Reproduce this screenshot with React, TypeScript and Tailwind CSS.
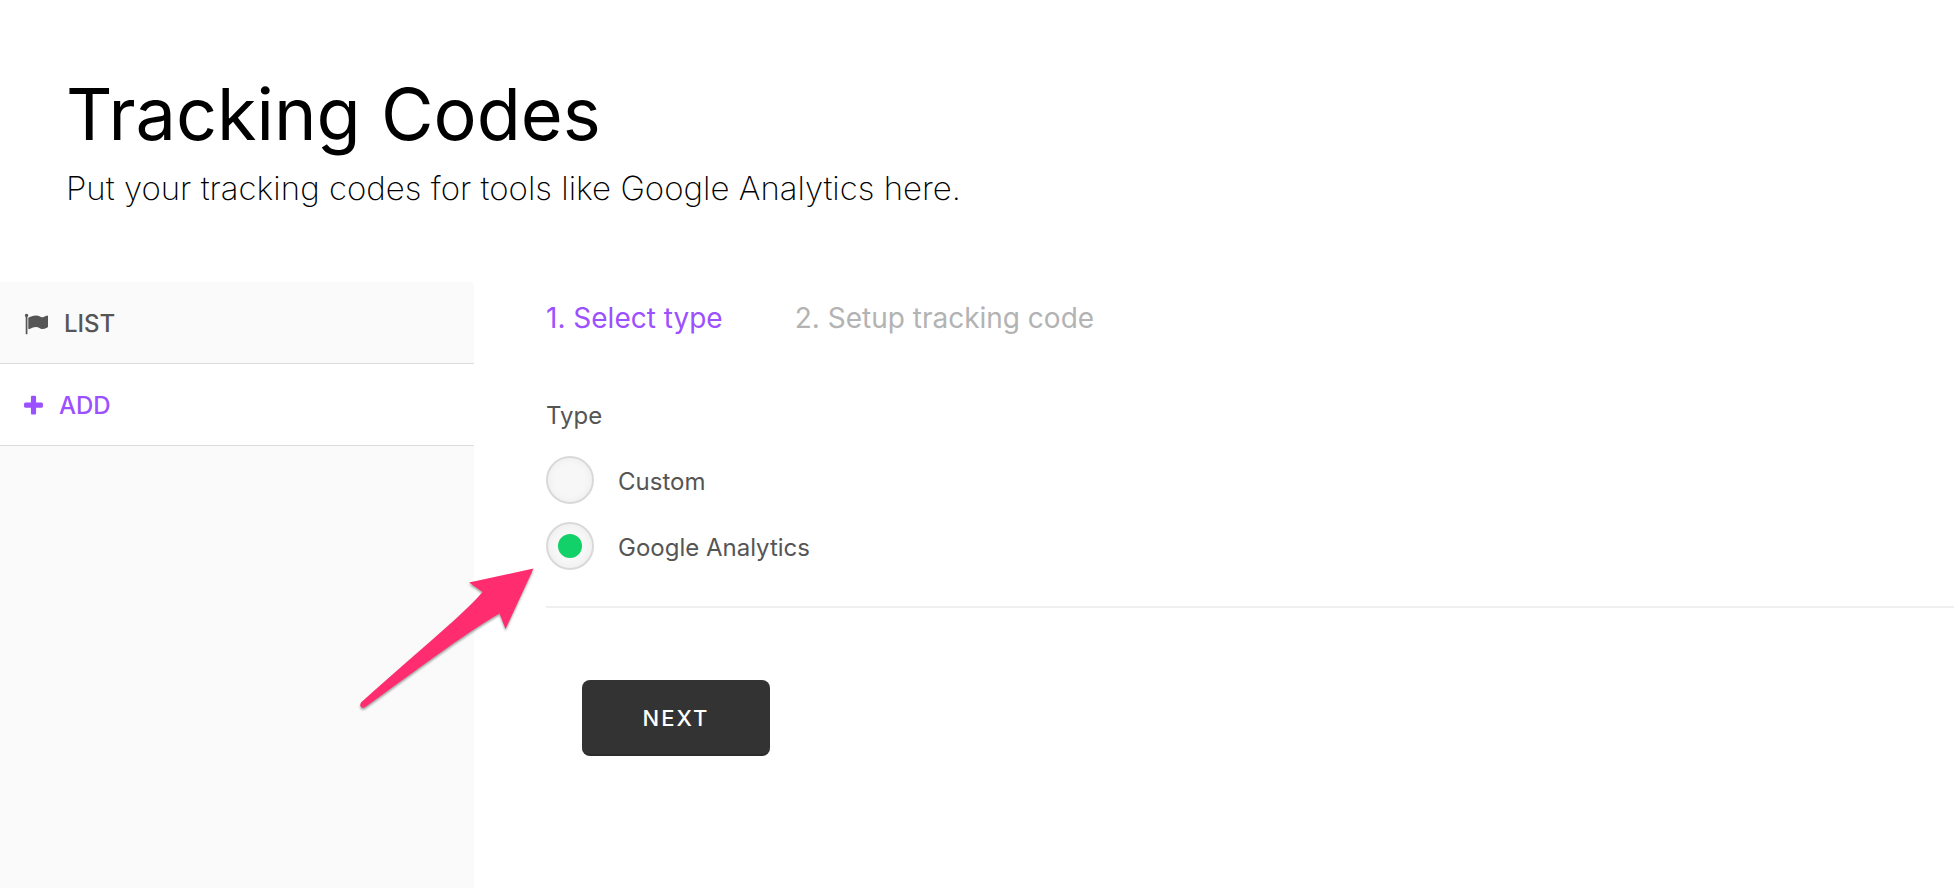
import { useState } from "react";

function FlagIcon() {
  return (
    <svg viewBox="0 0 1792 1792" className="h-6 w-6" fill="currentColor" aria-hidden="true">
      <path d="M320 256q0 72-64 110v1266q0 13-9.5 22.5t-22.5 9.5h-64q-13 0-22.5-9.5t-9.5-22.5v-1266q-64-38-64-110 0-53 37.5-90.5t90.5-37.5 90.5 37.5 37.5 90.5zm1472 64v763q0 25-12.5 38.5t-39.5 27.5q-215 116-369 116-61 0-123.5-22t-108.5-48-115.5-48-142.5-22q-192 0-464 146-17 9-33 9-26 0-45-19t-19-45v-742q0-32 31-55 21-14 79-43 236-120 421-120 107 0 200 29t219 88q38 19 88 19 54 0 117.5-21t110-47 88-47 54.5-21q26 0 45 19t19 45z" />
    </svg>
  );
}

function PlusIcon() {
  return (
    <svg viewBox="192 0 1408 1792" className="h-6 w-[19px]" fill="currentColor" aria-hidden="true">
      <path d="M1600 736v192q0 40-28 68t-68 28h-416v416q0 40-28 68t-68 28h-192q-40 0-68-28t-28-68v-416h-416q-40 0-68-28t-28-68v-192q0-40 28-68t68-28h416v-416q0-40 28-68t68-28h192q40 0 68 28t28 68v416h416q40 0 68 28t28 68z" />
    </svg>
  );
}

function PointerArrow() {
  return (
    <svg
      viewBox="0 0 186 150"
      className="pointer-events-none absolute -left-[192px] top-[42px] h-[150px] w-[186px] overflow-visible drop-shadow-[0_2px_1px_rgba(0,0,0,0.35)]"
      aria-hidden="true"
    >
      <path
        d="M179.500 4.500L115 18.500L128.500 28C110 50 70 82 7 138.500C4.500 143 8.500 145.500 12 142.500C60 108 110 70 145.500 49.500L151.500 65Z"
        fill="#ff2d6f"
      />
    </svg>
  );
}

const TYPES = ["Custom", "Google Analytics"];

export default function App() {
  const [type, setType] = useState("Google Analytics");

  return (
    <div className="flex min-h-screen flex-col bg-white font-['Inter','Liberation_Sans',sans-serif] text-[#555]">
      <header className="px-[66px] pb-[72px] pt-[70px] text-black">
        <h1 className="text-[72px] leading-[88px]">Tracking Codes</h1>
        <p className="mt-2 text-[33px] font-extralight leading-[44px]">
          Put your tracking codes for tools like Google Analytics here.
        </p>
      </header>

      <div className="flex flex-1">
        <nav className="w-[474px] shrink-0 rounded-tr bg-[#fafafa] text-2xl font-medium">
          <a href="#list" className="flex h-[82px] items-center gap-4 border-b border-[#dcdcdc] px-6 pt-0.5">
            <FlagIcon />
            LIST
          </a>
          <a
            href="#add"
            className="flex h-[82px] items-center gap-4 border-b border-[#dcdcdc] bg-white px-6 pt-0.5 text-[#9b51ff]"
          >
            <PlusIcon />
            ADD
          </a>
        </nav>

        <main className="min-w-0 flex-1 pl-[72px] pt-5">
          <ol className="flex gap-[72px] text-[28px] leading-8">
            <li className="text-[#9b51ff]">1. Select type</li>
            <li className="text-[#b3b3b3]">2. Setup tracking code</li>
          </ol>

          <form onSubmit={(e) => e.preventDefault()}>
            <fieldset className="mt-[66px] border-b-2 border-[#efefef] pb-9">
              <legend className="text-2xl">Type</legend>
              <div className="mt-6 flex flex-col items-start gap-[18px]">
                {TYPES.map((name) => (
                  <label key={name} className="relative flex items-center gap-6 text-2xl">
                    <input
                      type="radio"
                      name="type"
                      checked={type === name}
                      onChange={() => setType(name)}
                      className="grid h-12 w-12 appearance-none place-items-center rounded-full border-2 border-[#d9d9d9] bg-[#f7f7f7] shadow-[inset_0_0_8px_rgba(0,0,0,0.05)] before:h-6 before:w-6 before:rounded-full checked:before:bg-[#13d169] checked:before:content-['']"
                    />
                    <span className="pt-1">{name}</span>
                    {name === "Google Analytics" && <PointerArrow />}
                  </label>
                ))}
              </div>
            </fieldset>
            <button
              type="submit"
              className="ml-9 mt-[72px] h-[76px] min-w-[188px] rounded-lg border-b-2 border-[#2b2b2b] bg-[#333] px-[60px] pt-0.5 text-[22px] font-medium tracking-[2px] text-white"
            >
              NEXT
            </button>
          </form>
        </main>
      </div>
    </div>
  );
}
